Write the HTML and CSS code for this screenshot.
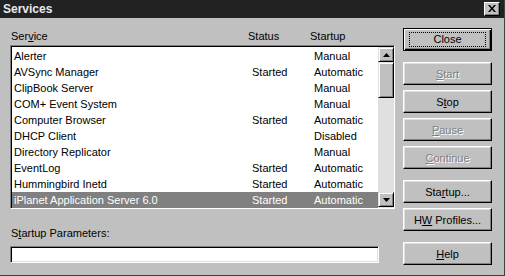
FILE: index.html
```html
<!DOCTYPE html>
<html lang="en">
<head>
    <meta charset="UTF-8">
    <title>Services</title>
    <link rel="stylesheet" href="styles.css">
</head>

<body>
    <div class="window">
        <!-- Barra de titulo -->
        <div class="titlebar">
            <span class="title">Services</span>
            <span class="title-close">
                <svg width="8" height="7" viewBox="0 0 8 7">
                    <path d="M0 0h2l2 2.5L6 0h2L5 3.5 8 7H6L4 4.5 2 7H0l3-3.5z" fill="#000"/>
                </svg>
            </span>
        </div>

        <div class="content">
            <!-- Panel izquierdo -->
            <div class="left">
                <div class="list-head">
                    <span class="col-name">Ser<u>v</u>ice</span>
                    <span class="col-status">Status</span>
                    <span class="col-startup">Startup</span>
                </div>

                <div class="list">
                    <div class="rows" id="rows"></div>
                    <div class="scrollbar">
                        <div class="sb-btn">
                            <svg width="7" height="4" viewBox="0 0 7 4"><path d="M3.5 0L7 4H0z" fill="#000"/></svg>
                        </div>
                        <div class="sb-thumb"></div>
                        <div class="sb-track"></div>
                        <div class="sb-btn">
                            <svg width="7" height="4" viewBox="0 0 7 4"><path d="M0 0h7L3.5 4z" fill="#000"/></svg>
                        </div>
                    </div>
                </div>

                <div class="param-label">S<u>t</u>artup Parameters:</div>
                <div class="param-input"></div>
            </div>

            <!-- Botones -->
            <div class="buttons">
                <div class="btn btn-default"><span class="focus">Close</span></div>
                <div class="btn disabled gap"><span><u>S</u>tart</span></div>
                <div class="btn"><span>S<u>t</u>op</span></div>
                <div class="btn disabled"><span><u>P</u>ause</span></div>
                <div class="btn disabled"><span><u>C</u>ontinue</span></div>
                <div class="btn gap"><span>Sta<u>r</u>tup...</span></div>
                <div class="btn"><span>H<u>W</u> Profiles...</span></div>
                <div class="btn gap"><span><u>H</u>elp</span></div>
            </div>
        </div>
    </div>

    <script>
        const servicios = [
            ["Alerter", "", "Manual"],
            ["AVSync Manager", "Started", "Automatic"],
            ["ClipBook Server", "", "Manual"],
            ["COM+ Event System", "", "Manual"],
            ["Computer Browser", "Started", "Automatic"],
            ["DHCP Client", "", "Disabled"],
            ["Directory Replicator", "", "Manual"],
            ["EventLog", "Started", "Automatic"],
            ["Hummingbird Inetd", "Started", "Automatic"],
            ["iPlanet Application Server 6.0", "Started", "Automatic"]
        ];

        const contenedor = document.getElementById('rows');
        servicios.forEach((s, i) => {
            const sel = i === servicios.length - 1 ? ' selected' : '';
            contenedor.insertAdjacentHTML('beforeend', `
                <div class="row${sel}">
                    <span class="col-name">${s[0]}</span>
                    <span class="col-status">${s[1]}</span>
                    <span class="col-startup">${s[2]}</span>
                </div>`);
        });
    </script>
</body>
</html>
```

FILE: styles.css
```css
/* General */
body {
    margin: 0;
    font-family: 'Liberation Sans', Arial, sans-serif;
    font-size: 11px;
    color: #000;
    background: #c0c0c0;
}

.window {
    width: 504px;
    height: 275px;
    background: #c0c0c0;
    border-right: 1px solid #404040;
    border-bottom: 1px solid #404040;
    overflow: hidden;
}

u {
    text-decoration: underline;
    text-underline-offset: 1px;
}

/* Barra de titulo */
.titlebar {
    height: 18px;
    background: #222222;
    display: flex;
    align-items: center;
    justify-content: space-between;
    padding: 0 4px 0 3px;
}

.title {
    color: #e8e8e8;
    font-size: 12px;
    font-weight: bold;
    margin-top: -1px;
}

.title-close {
    width: 14px;
    height: 12px;
    margin-top: -1px;
    background: #c0c0c0;
    border: 1px solid;
    border-color: #fff #000 #000 #fff;
    box-shadow: inset -1px -1px #808080;
    display: flex;
    align-items: center;
    justify-content: center;
}

/* Contenido */
.content {
    display: flex;
}

.left {
    padding: 12px 0 0 10px;
    width: 385px;
}

.list-head {
    display: flex;
    height: 15px;
    line-height: 13px;
}

.list-head .col-name {
    padding-left: 1px;
    width: 237px;
}

.list-head .col-status {
    width: 62px;
}

/* Lista */
.list {
    display: flex;
    height: 160px;
    border: 1px solid;
    border-color: #808080 #fff #fff #808080;
    box-shadow: inset 1px 1px #000, inset -1px -1px #dfdfdf;
    padding: 1px;
    background: #fff;
}

.rows {
    flex: 1;
    margin-top: 1px;
}

.row {
    display: flex;
    height: 16px;
    line-height: 16px;
    white-space: nowrap;
}

.row .col-name {
    padding-left: 2px;
    width: 238px;
}

.row .col-status {
    width: 62px;
}

.row.selected {
    background: #808080;
    color: #fff;
}

.scrollbar {
    width: 16px;
    display: flex;
    flex-direction: column;
    background: #e0e0e0;
    margin-right: -1px;
}

.sb-btn,
.sb-thumb {
    background: #c0c0c0;
    border: 1px solid;
    border-color: #dfdfdf #000 #000 #dfdfdf;
    box-shadow: inset 1px 1px #fff, inset -1px -1px #808080;
    box-sizing: border-box;
}

.sb-btn {
    height: 15px;
    display: flex;
    align-items: center;
    justify-content: center;
}

.sb-thumb {
    height: 36px;
}

.sb-track {
    flex: 1;
}

/* Parametros */
.param-label {
    margin-top: 18px;
    line-height: 13px;
    padding-left: 1px;
}

.param-input {
    margin-top: 6px;
    width: 367px;
    height: 15px;
    background: #fff;
    border: 1px solid;
    border-color: #808080 #fff #fff #808080;
    box-shadow: inset 1px 1px #000, inset -1px -1px #dfdfdf;
}

/* Botones */
.buttons {
    margin-left: 8px;
    padding-top: 10px;
    display: flex;
    flex-direction: column;
    gap: 5px;
}

.btn {
    width: 89px;
    height: 23px;
    box-sizing: border-box;
    background: #c0c0c0;
    border: 1px solid;
    border-color: #fff #000 #000 #fff;
    box-shadow: inset -1px -1px #808080, inset 1px 1px #dfdfdf;
    display: flex;
    align-items: center;
    justify-content: center;
    font-size: 11px;
    white-space: nowrap;
}

.btn.gap {
    margin-top: 6px;
}

.btn-default {
    border: 1px solid #000;
    box-shadow: inset 1px 1px #fff, inset -1px -1px #000, inset -2px -2px #808080;
}

.btn-default .focus {
    width: 75px;
    height: 13px;
    line-height: 13px;
    text-align: center;
    border: 1px dotted #000;
}

.btn.disabled {
    color: #808080;
    text-shadow: 1px 1px #fff;
}
```
